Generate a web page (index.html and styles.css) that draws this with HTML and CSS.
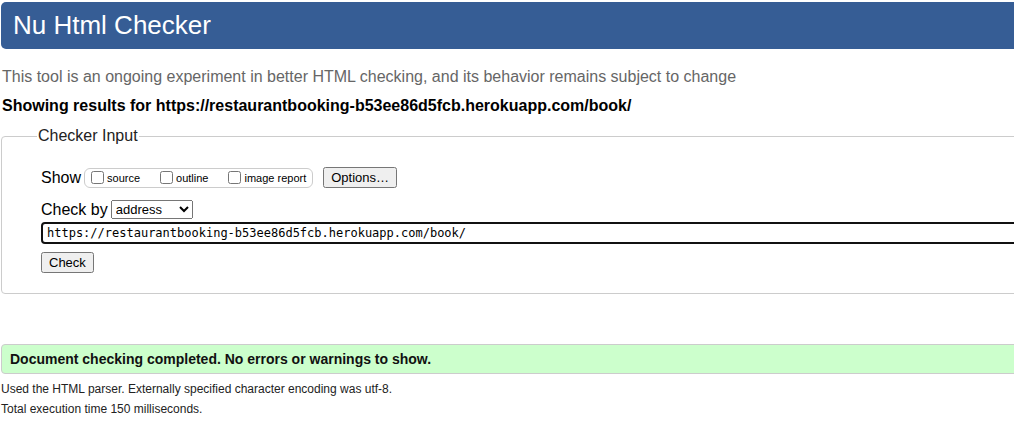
FILE: index.html
```html
<!DOCTYPE html>
<html>
<head>
<meta charset="utf-8">
<title>Nu Html Checker</title>
<link rel="stylesheet" href="styles.css">
</head>
<body>
<div class="page">
  <h1 class="title">Nu Html Checker</h1>
  <p class="intro">This tool is an ongoing experiment in better HTML checking, and its behavior remains subject to change</p>
  <p class="showing">Showing results for https://restaurantbooking-b53ee86d5fcb.herokuapp.com/book/</p>
  <form class="checker">
    <fieldset class="checker-set">
      <legend class="checker-legend">Checker Input</legend>
      <div class="row show-row">
        <span class="row-label">Show</span>
        <fieldset class="show-options">
          <label class="opt"><input type="checkbox" class="cb">source</label>
          <label class="opt"><input type="checkbox" class="cb">outline</label>
          <label class="opt"><input type="checkbox" class="cb">image report</label>
        </fieldset>
        <button type="button" class="btn">Options…</button>
      </div>
      <div class="row by-row">
        <span class="row-label">Check by</span>
        <select class="sel"><option>address</option></select>
      </div>
      <div class="url-row">
        <input class="url" type="text" value="https://restaurantbooking-b53ee86d5fcb.herokuapp.com/book/">
      </div>
      <div class="submit-row">
        <button type="button" class="btn">Check</button>
      </div>
    </fieldset>
  </form>
  <p class="success">Document checking completed. No errors or warnings to show.</p>
  <p class="details details-first">Used the HTML parser. Externally specified character encoding was utf-8.</p>
  <p class="details">Total execution time 150 milliseconds.</p>
</div>
</body>
</html>
```

FILE: styles.css
```css
html, body {
  margin: 0;
  padding: 0;
  overflow: hidden;
  background: #fff;
}
body {
  font-family: "Liberation Sans", Arial, sans-serif;
  color: #000;
}
.page {
  width: 1060px;
}
.title {
  margin: 2px 0 0 1px;
  height: 47px;
  line-height: 46px;
  padding-left: 12px;
  background: #365d95;
  color: #fff;
  font-size: 26px;
  font-weight: normal;
  border-radius: 5px 0 0 5px;
}
.intro {
  margin: 19px 0 0 2px;
  font-size: 16px;
  line-height: 18px;
  color: #666;
}
.showing {
  margin: 11px 0 0 2px;
  font-size: 16px;
  line-height: 18px;
  font-weight: bold;
}
.checker {
  margin: 0;
}
.checker-set {
  margin: 12px 0 0 1px;
  padding: 22px 0 20px 39px;
  border: 1px solid #ccc;
  border-radius: 4px;
}
.checker-legend {
  margin-left: -4px;
  padding: 0 1px;
  font-size: 16px;
  line-height: 18px;
  color: #222;
}
.row {
  display: flex;
  align-items: center;
}
.row-label {
  font-size: 16px;
  margin-right: 3px;
}
.show-options {
  display: flex;
  align-items: center;
  margin: 0 10px 0 0;
  padding: 0 6px 0 4px;
  height: 18px;
  border: 1px solid #ccc;
  border-radius: 6px;
}
.opt {
  display: flex;
  align-items: center;
  font-size: 11px;
  margin-right: 18px;
}
.opt:last-child {
  margin-right: 0;
}
.cb {
  margin: 0 3px 0 2px;
  width: 13px;
  height: 13px;
}
.btn {
  font-family: "Liberation Sans", Arial, sans-serif;
  font-size: 13px;
  padding: 1px 6px;
  height: 21px;
}
.by-row {
  margin-top: 12px;
}
.sel {
  font-family: "Liberation Sans", Arial, sans-serif;
  font-size: 13px;
  width: 82px;
  height: 19px;
  padding: 0;
}
.url-row {
  margin-top: 3px;
}
.url {
  box-sizing: border-box;
  width: 100%;
  height: 22px;
  border: 2px solid #111;
  border-radius: 4px;
  padding: 0 4px;
  font-family: "DejaVu Sans Mono", Consolas, monospace;
  font-size: 12px;
  color: #000;
  outline: none;
}
.submit-row {
  margin-top: 8px;
}
.success {
  margin: 50px 0 0 1px;
  height: 28px;
  line-height: 28px;
  padding-left: 8px;
  background: #ccffcc;
  border: 1px solid #ccc;
  border-radius: 4px 0 0 4px;
  font-size: 14px;
  font-weight: bold;
  color: #111;
}
.details {
  margin: 5px 0 0 1px;
  font-size: 12px;
  line-height: 15px;
  color: #222;
}
.details-first {
  margin-top: 8px;
}
```
